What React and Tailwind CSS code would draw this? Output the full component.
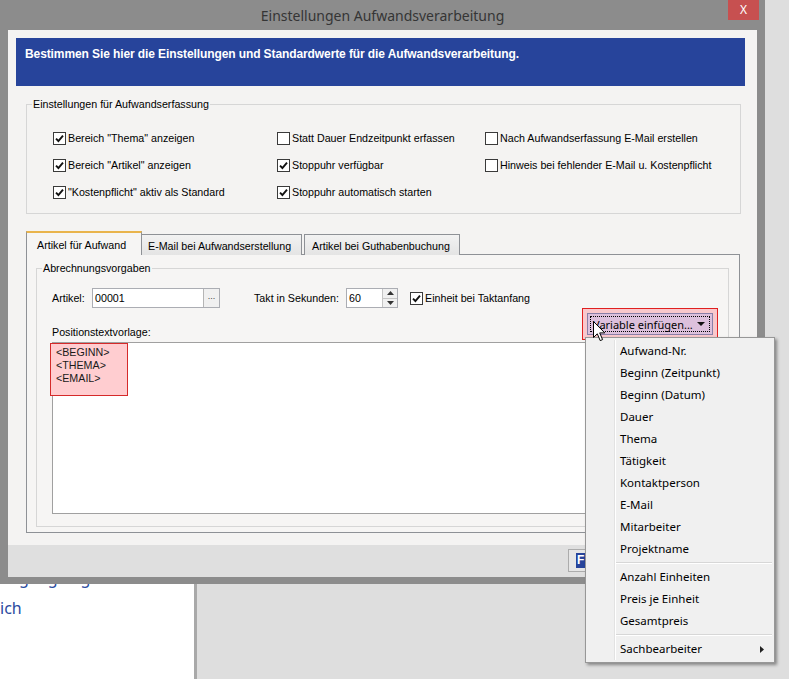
import React from "react";

function CheckBox({ checked }) {
  return (
    <span className="flex h-[13px] w-[13px] shrink-0 items-center justify-center border border-[#3a3a3a] bg-white">
      {checked && (
        <svg width="9" height="9" viewBox="0 0 9 9">
          <path d="M1 4.6 L3.4 7 L8 1.6" fill="none" stroke="#111" strokeWidth="1.9" />
        </svg>
      )}
    </span>
  );
}

function CheckItem({ checked, label }) {
  return (
    <div className="flex h-[13px] items-center gap-[2px]">
      <CheckBox checked={checked} />
      <span className="whitespace-nowrap text-[10.7px] leading-[13px] text-black">{label}</span>
    </div>
  );
}

const menuA = [
  "Aufwand-Nr.",
  "Beginn (Zeitpunkt)",
  "Beginn (Datum)",
  "Dauer",
  "Thema",
  "Tätigkeit",
  "Kontaktperson",
  "E-Mail",
  "Mitarbeiter",
  "Projektname",
];
const menuB = ["Anzahl Einheiten", "Preis je Einheit", "Gesamtpreis"];

function MenuItem({ label, sub }) {
  return (
    <div className="flex h-[22px]">
      <div className="w-[29px] shrink-0 border-r border-[#e2e2e2]" />
      <div className="w-[1px] bg-white" />
      <div className="flex flex-1 items-center justify-between pl-[4px] pr-[10px]">
        <span className="whitespace-nowrap">{label}</span>
        {sub && (
          <svg width="4" height="7" viewBox="0 0 4 7">
            <path d="M0 0 L4 3.5 L0 7 Z" fill="#222" />
          </svg>
        )}
      </div>
    </div>
  );
}

function MenuSep() {
  return (
    <div className="flex h-[6px]">
      <div className="w-[29px] shrink-0 border-r border-[#e2e2e2]" />
      <div className="w-[1px] bg-white" />
      <div className="flex flex-1 flex-col justify-center pr-[2px]">
        <div className="h-[1px] bg-[#d7d7d7]" />
        <div className="h-[1px] bg-white" />
      </div>
    </div>
  );
}

export default function App() {
  return (
    <div className="relative h-[679px] w-[789px] overflow-hidden font-['Liberation_Sans',Arial,sans-serif]">
      {/* background application */}
      <div className="flex h-full">
        <div className="w-[194px] bg-white pt-[563px] font-['Noto_Sans',sans-serif] text-[16px] leading-[30px] text-[#2a4a9e]">
          <div className="whitespace-nowrap">Zugangsregeln</div>
          <div className="whitespace-nowrap">ich</div>
        </div>
        <div className="w-[3px] bg-[#a9a9a9]" />
        <div className="flex-1 bg-[#dedede]" />
      </div>

      {/* dialog window */}
      <div className="absolute left-0 top-0 flex h-[584px] w-[765px] flex-col bg-[#8c8c8c] px-[8px] pb-[7px]">
        <div className="relative flex h-[30px] items-center justify-center">
          <span className="font-['Noto_Sans',sans-serif] text-[14px] text-[#353535]">
            Einstellungen Aufwandsverarbeitung
          </span>
          <div className="absolute right-[-2px] top-0 flex h-[20px] w-[31px] items-center justify-center bg-[#c75050] pb-[1px] font-['Noto_Sans',sans-serif] text-[12px] leading-none text-white">
            X
          </div>
        </div>

        <div className="flex flex-1 flex-col">
          <div className="flex-1 bg-[#f4f3f2] pl-[8px] pr-[12px] pt-[8px]">
            <div className="h-[48px] bg-[#27449b] px-[9px] pt-[9px] text-[12px] font-bold leading-[14px] tracking-[-0.1px] text-white">
              Bestimmen Sie hier die Einstellungen und Standardwerte für die Aufwandsverarbeitung.
            </div>

            <fieldset className="ml-[10px] mr-[4px] mt-[12px] border border-[#d6d6d6] pb-[14px]">
              <legend className="ml-[5px] px-[1px] text-[10.7px] leading-[13px] text-black">
                Einstellungen für Aufwandserfassung
              </legend>
              <div className="grid grid-cols-[224px_208px_1fr] gap-y-[14px] pl-[26px] pt-[21px]">
                <CheckItem checked label={'Bereich "Thema" anzeigen'} />
                <CheckItem label="Statt Dauer Endzeitpunkt erfassen" />
                <CheckItem label="Nach Aufwandserfassung E-Mail erstellen" />
                <CheckItem checked label={'Bereich "Artikel" anzeigen'} />
                <CheckItem checked label="Stoppuhr verfügbar" />
                <CheckItem label="Hinweis bei fehlender E-Mail u. Kostenpflicht" />
                <CheckItem checked label={'"Kostenpflicht" aktiv als Standard'} />
                <CheckItem checked label="Stoppuhr automatisch starten" />
                <div />
              </div>
            </fieldset>

            {/* tabs */}
            <div className="ml-[10px] mt-[17px] -mb-[1px] flex h-[24px] items-end text-[10.7px] text-black">
              <div className="relative z-10 flex h-[24px] w-[116px] items-start border-x border-t-2 border-[#8e9196] border-t-[#e9b44c] bg-[#f6f5f4] pl-[10px] pt-[4px]">
                Artikel für Aufwand
              </div>
              <div className="flex h-[21px] w-[160px] items-start border-r border-t border-[#8e9196] bg-gradient-to-b from-[#f2f2f2] to-[#e4e4e4] pl-[6px] pt-[3px]">
                E-Mail bei Aufwandserstellung
              </div>
              <div className="ml-[2px] flex h-[21px] w-[156px] items-start border-x border-t border-[#8e9196] bg-gradient-to-b from-[#f2f2f2] to-[#e4e4e4] pl-[7px] pt-[3px]">
                Artikel bei Guthabenbuchung
              </div>
            </div>
            <div className="ml-[10px] w-[714px] border border-[#8e9196] bg-[#f6f5f4] pb-[5px]">
              <fieldset className="ml-[9px] mt-[7px] w-[693px] border border-[#d6d6d6] pb-[12px]">
                <legend className="ml-[5px] px-[1px] text-[10.7px] leading-[13px] text-black">
                  Abrechnungsvorgaben
                </legend>
                <div className="pl-[15px] pt-[13px] text-[10.7px] text-black">
                  <div className="flex h-[20px] items-center">
                    <span className="w-[40px]">Artikel:</span>
                    <div className="flex h-[20px] w-[128px] border border-[#abadb3] bg-white">
                      <span className="flex-1 pl-[2px] leading-[18px]">00001</span>
                      <span className="flex w-[16px] items-center justify-center border-l border-[#b5b5b5] bg-[#f0f0f0] pb-[3px] text-[9px] text-[#444]">
                        ...
                      </span>
                    </div>
                    <span className="ml-[34px] w-[92px] whitespace-nowrap">Takt in Sekunden:</span>
                    <div className="flex h-[20px] w-[52px] border border-[#abadb3] bg-white">
                      <span className="flex-1 pl-[2px] leading-[18px]">60</span>
                      <div className="flex w-[15px] flex-col border-l border-[#c5c5c5]">
                        <div className="flex flex-1 items-center justify-center border-b border-[#c5c5c5] bg-[#f0f0f0]">
                          <svg width="7" height="4" viewBox="0 0 7 4">
                            <path d="M0 4 L3.5 0 L7 4 Z" fill="#333" />
                          </svg>
                        </div>
                        <div className="flex flex-1 items-center justify-center bg-[#f0f0f0]">
                          <svg width="7" height="4" viewBox="0 0 7 4">
                            <path d="M0 0 L3.5 4 L7 0 Z" fill="#333" />
                          </svg>
                        </div>
                      </div>
                    </div>
                    <div className="ml-[12px]">
                      <CheckItem checked label="Einheit bei Taktanfang" />
                    </div>
                  </div>

                  <div className="mt-[5px] flex h-[26px] w-[661px] items-end justify-between">
                    <span className="leading-[13px]">Positionstextvorlage:</span>
                    <div className="relative mb-[4px]">
                      <div className="absolute -inset-[5px] border border-[#e02020] bg-[#ff6070]/30" />
                      <div className="relative flex h-[22px] w-[126px] items-center border border-[#8a7fa8] bg-[#dcc0dc] p-[2px] font-['Noto_Sans',sans-serif] text-[11px]">
                        <div className="flex h-full w-full items-center justify-between border border-dotted border-black pl-[2px] pr-[4px]">
                          <span className="whitespace-nowrap leading-none">Variable einfügen...</span>
                          <svg width="8" height="4" viewBox="0 0 8 4">
                            <path d="M0 0 L8 0 L4 4 Z" fill="#111" />
                          </svg>
                        </div>
                      </div>
                    </div>
                  </div>

                  <div className="relative mt-[3px] h-[172px] w-[661px] border border-[#a0a0a0] bg-white pl-[3px] pt-[3px] leading-[13px] text-[#1a1a1a]">
                    <div className="absolute -left-[3px] top-0 h-[53px] w-[78px] border border-[#d52a2a] bg-[#ffcdd0]" />
                    <div className="relative">&lt;BEGINN&gt;</div>
                    <div className="relative">&lt;THEMA&gt;</div>
                    <div className="relative">&lt;EMAIL&gt;</div>
                  </div>
                </div>
              </fieldset>
            </div>
          </div>

          <div className="h-[32px] bg-[#dfdfdf] pl-[560px] pt-[4px]">
            <div className="flex h-[23px] w-[24px] items-center border border-[#acacac] bg-[#e6e6e6] pl-[7px] text-[12px]">
              <span className="bg-[#27449b] px-[1px] font-bold leading-[15px] text-white">F</span>
            </div>
          </div>
        </div>
      </div>

      {/* dropdown menu */}
      <div className="absolute left-[585px] top-[337px] w-[190px] border border-[#979797] bg-[#f0f0f0] py-[2px] font-['Noto_Sans',sans-serif] text-[11.5px] text-black shadow-[2px_2px_3px_rgba(0,0,0,0.4)]">
        {menuA.map((m) => (
          <MenuItem key={m} label={m} />
        ))}
        <MenuSep />
        {menuB.map((m) => (
          <MenuItem key={m} label={m} />
        ))}
        <MenuSep />
        <MenuItem label="Sachbearbeiter" sub />
      </div>

      {/* mouse cursor */}
      <svg className="absolute left-[593px] top-[321px]" width="13" height="21" viewBox="0 0 13 21">
        <path
          d="M0.5 0.5 L0.5 16.5 L4.3 12.8 L7.2 19.6 L9.6 18.6 L6.7 11.9 L11.8 11.9 Z"
          fill="white"
          stroke="black"
          strokeWidth="1"
          strokeLinejoin="miter"
        />
      </svg>
    </div>
  );
}
